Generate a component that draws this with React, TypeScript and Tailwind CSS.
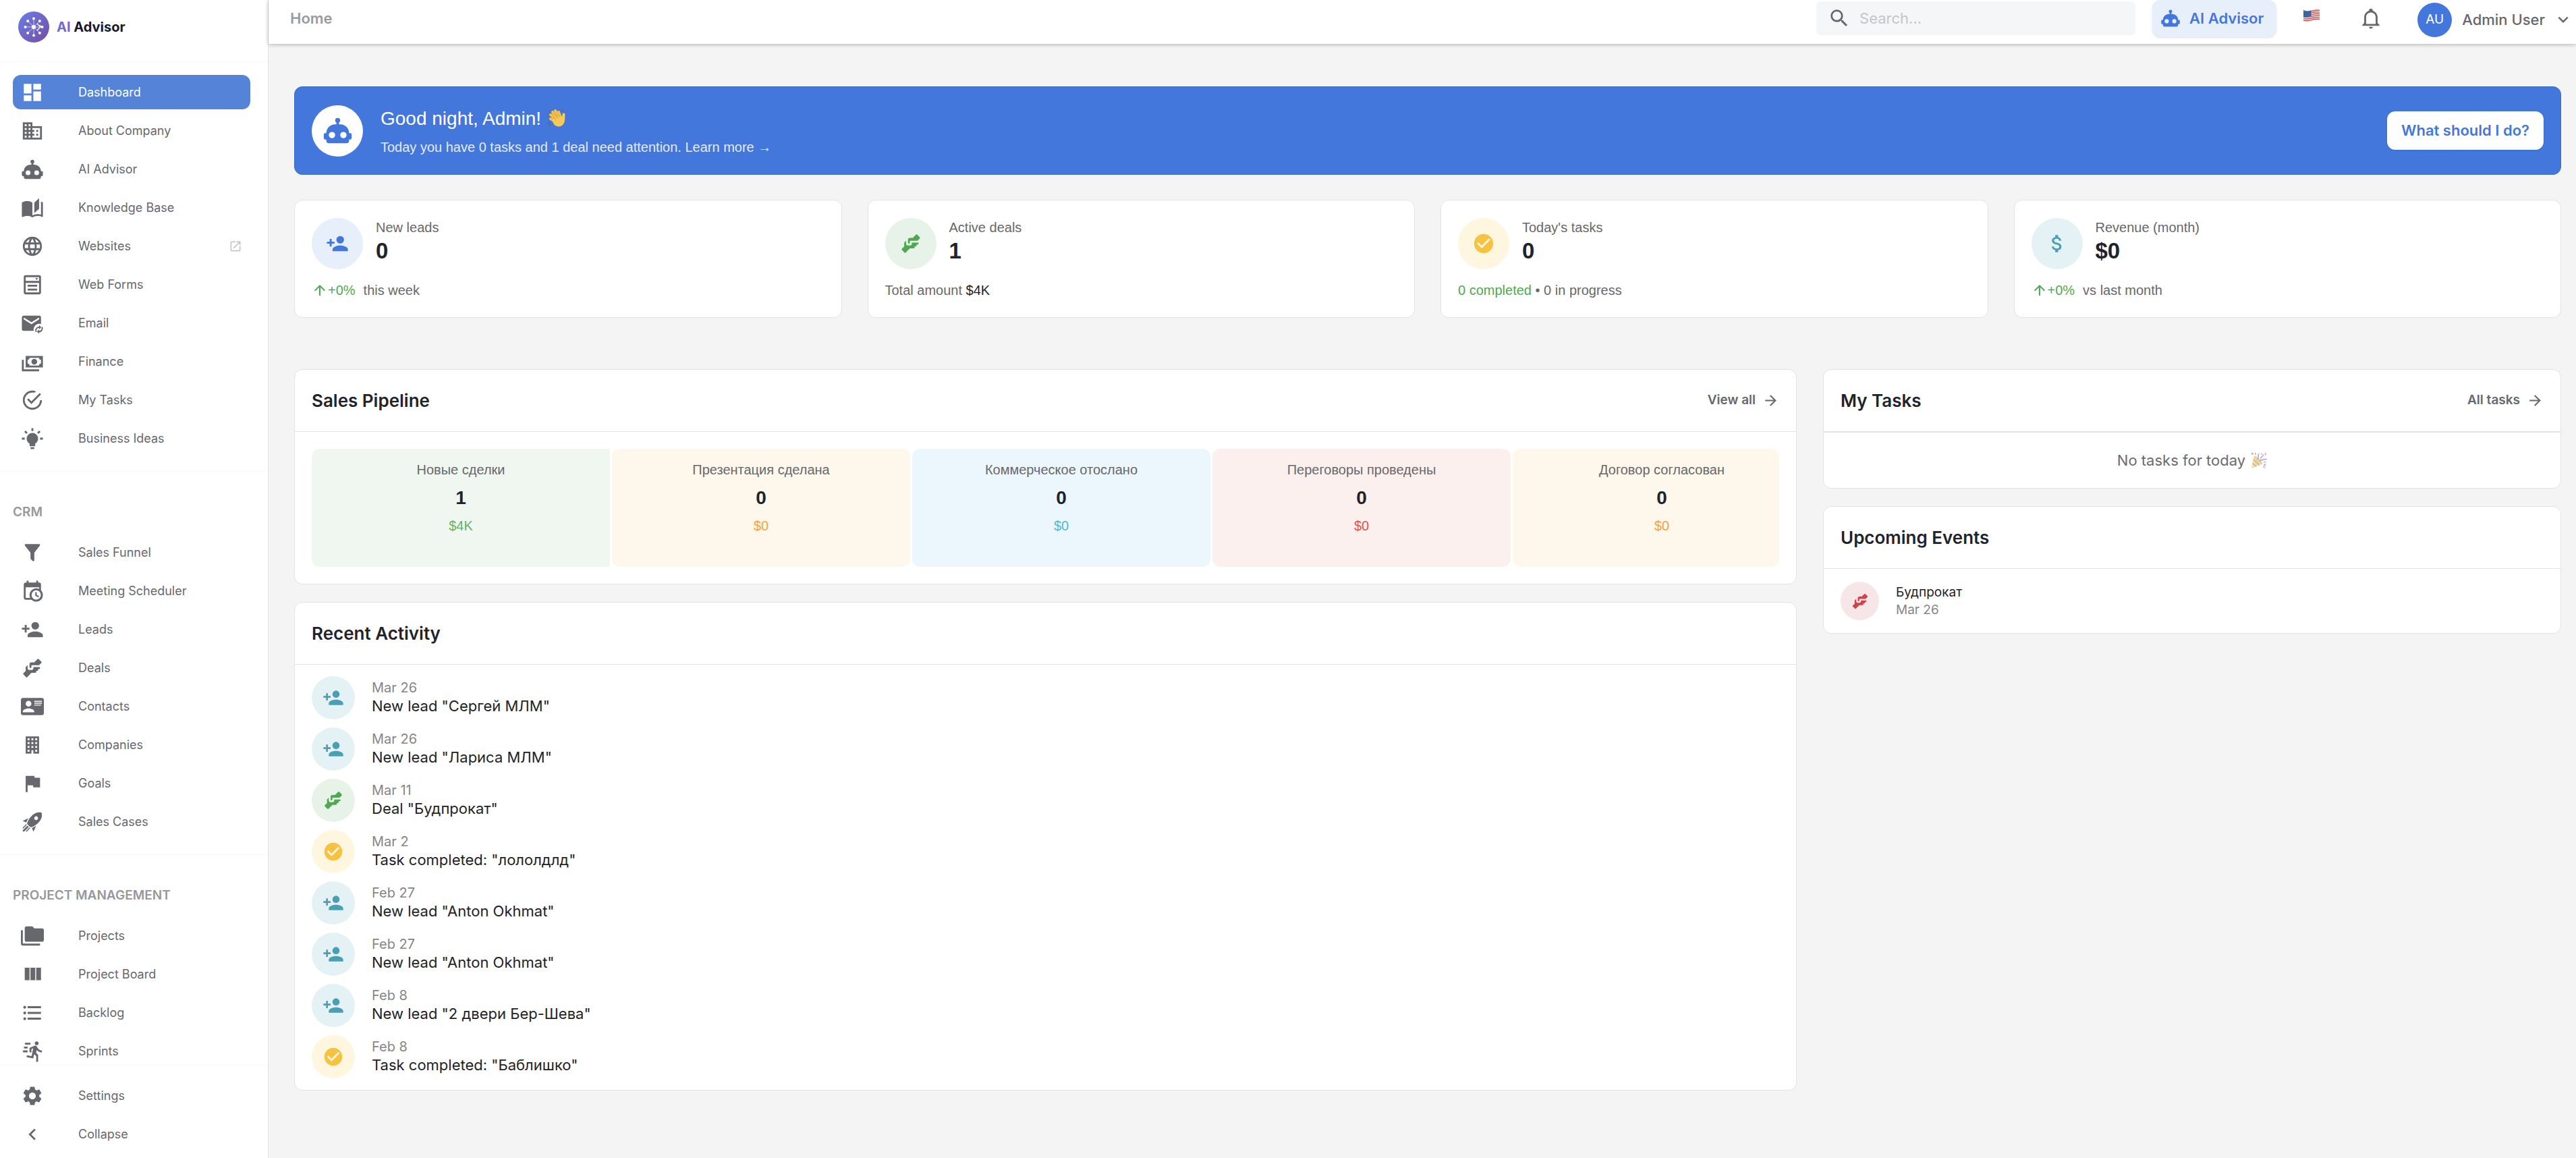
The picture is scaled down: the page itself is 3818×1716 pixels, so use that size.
import { useState } from "react";
import {
  MdDashboard, MdDomain, MdLanguage, MdFlag, MdFormatListBulleted, MdSettings, MdChevronLeft,
  MdOpenInNew, MdSearch, MdCheckCircle, MdAttachMoney, MdArrowUpward, MdArrowForward, MdExpandMore,
} from "react-icons/md";

const PATHS = {
  robot: "M12,2A2,2 0 0,1 14,4C14,4.74 13.6,5.39 13,5.73V7H14A7,7 0 0,1 21,14H22A1,1 0 0,1 23,15V18A1,1 0 0,1 22,19H21V20A2,2 0 0,1 19,22H5A2,2 0 0,1 3,20V19H2A1,1 0 0,1 1,18V15A1,1 0 0,1 2,14H3A7,7 0 0,1 10,7H11V5.73C10.4,5.39 10,4.74 10,4A2,2 0 0,1 12,2M7.5,13A2.5,2.5 0 0,0 5,15.5A2.5,2.5 0 0,0 7.5,18A2.5,2.5 0 0,0 10,15.5A2.5,2.5 0 0,0 7.5,13M16.5,13A2.5,2.5 0 0,0 14,15.5A2.5,2.5 0 0,0 16.5,18A2.5,2.5 0 0,0 19,15.5A2.5,2.5 0 0,0 16.5,13Z",
  book: "M19 2L14 6.5V17.5L19 13V2M6.5 5C4.55 5 2.45 5.4 1 6.5V21.16C1 21.41 1.25 21.66 1.5 21.66C1.6 21.66 1.65 21.59 1.75 21.59C3.1 20.94 5.05 20.5 6.5 20.5C8.45 20.5 10.55 20.9 12 22C13.35 21.15 15.8 20.5 17.5 20.5C19.15 20.5 20.85 20.81 22.25 21.56C22.35 21.61 22.4 21.59 22.5 21.59C22.75 21.59 23 21.34 23 21.09V6.5C22.4 6.05 21.75 5.75 21 5.5V19C19.9 18.65 18.7 18.5 17.5 18.5C15.8 18.5 13.35 19.15 12 20V6.5C10.55 5.4 8.45 5 6.5 5Z",
  form: "M15,5H18L16.5,7L15,5M5,2H19A2,2 0 0,1 21,4V20A2,2 0 0,1 19,22H5A2,2 0 0,1 3,20V4A2,2 0 0,1 5,2M5,4V8H19V4H5M5,20H19V10H5V20M7,12H17V14H7V12M7,16H17V18H7V16Z",
  mailSync: "M3,4C1.9,4 1,4.9 1,6V18A2,2 0 0,0 3,20H13.5A6,6 0 0,1 19,12.5A6,6 0 0,1 21,12.8V6A2,2 0 0,0 19,4H3M3,6L11,11L19,6V8L11,13L3,8V6M19,14V15.5A4,4 0 0,0 15.54,21.5L16.63,20.4C15.8,18.9 16.9,17 19,17V18.5L21.25,16.25L19,14M22.46,15.5L21.37,16.6C22.2,18.1 21.1,20 19,20V18.5L16.75,20.75L19,23V21.5A4,4 0 0,0 22.46,15.5Z",
  cash: "M5,6H23V18H5V6M14,9A3,3 0 0,1 17,12A3,3 0 0,1 14,15A3,3 0 0,1 11,12A3,3 0 0,1 14,9M9,8A2,2 0 0,1 7,10V14A2,2 0 0,1 9,16H19A2,2 0 0,1 21,14V10A2,2 0 0,1 19,8H9M1,10H3V20H19V22H1V10Z",
  checkOutline: "M20,12A8,8 0 0,1 12,20A8,8 0 0,1 4,12A8,8 0 0,1 12,4C12.76,4 13.5,4.11 14.2,4.31L15.77,2.74C14.61,2.26 13.34,2 12,2A10,10 0 0,0 2,12A10,10 0 0,0 12,22A10,10 0 0,0 22,12H20M7.91,10.08L6.5,11.5L11,16L21,6L19.59,4.58L11,13.17L7.91,10.08Z",
  bulb: "M12,6A6,6 0 0,1 18,12C18,14.22 16.79,16.16 15,17.2V19A1,1 0 0,1 14,20H10A1,1 0 0,1 9,19V17.2C7.21,16.16 6,14.22 6,12A6,6 0 0,1 12,6M14,21V22A1,1 0 0,1 13,23H11A1,1 0 0,1 10,22V21H14M20,11H23V13H20V11M1,11H4V13H1V11M13,1V4H11V1H13M4.92,3.5L7.05,5.64L5.63,7.05L3.5,4.93L4.92,3.5M16.95,5.63L19.07,3.5L20.5,4.93L18.37,7.05L16.95,5.63Z",
  filter: "M14,12V19.88C14.04,20.18 13.94,20.5 13.71,20.71C13.32,21.1 12.69,21.1 12.3,20.71L10.29,18.7C10.06,18.47 9.96,18.16 10,17.87V12H9.97L4.21,4.62C3.87,4.19 3.95,3.56 4.38,3.22C4.57,3.08 4.78,3 5,3H19C19.22,3 19.43,3.08 19.62,3.22C20.05,3.56 20.13,4.19 19.79,4.62L14.03,12H14Z",
  calendar: "M15,13H16.5V15.82L18.94,17.23L18.19,18.53L15,16.69V13M19,8H5V19H9.67C9.24,18.09 9,17.07 9,16A7,7 0 0,1 16,9C17.07,9 18.09,9.24 19,9.67V8M5,21C3.89,21 3,20.1 3,19V5C3,3.89 3.89,3 5,3H6V1H8V3H16V1H18V3H19A2,2 0 0,1 21,5V11.1C22.24,12.36 23,14.09 23,16A7,7 0 0,1 16,23C14.09,23 12.36,22.24 11.1,21H5M16,11.15A4.85,4.85 0 0,0 11.15,16C11.15,18.68 13.32,20.85 16,20.85A4.85,4.85 0 0,0 20.85,16C20.85,13.32 18.68,11.15 16,11.15Z",
  userPlus: "M15,14C12.33,14 7,15.33 7,18V20H23V18C23,15.33 17.67,14 15,14M6,10V7H4V10H1V12H4V15H6V12H9V10M15,12A4,4 0 0,0 19,8A4,4 0 0,0 15,4A4,4 0 0,0 11,8A4,4 0 0,0 15,12Z",
  handshake: "M11 6H14L17.29 2.7A1 1 0 0 1 18.71 2.7L21.29 5.29A1 1 0 0 1 21.29 6.7L19 9H11V11A1 1 0 0 1 10 12A1 1 0 0 1 9 11V8A2 2 0 0 1 11 6M5 11V15L2.71 17.29A1 1 0 0 0 2.71 18.71L5.29 21.29A1 1 0 0 0 6.71 21.29L11 17H15A1 1 0 0 0 16 16V15H17A1 1 0 0 0 18 14V13H19A1 1 0 0 0 20 12V11H13V12A2 2 0 0 1 11 14H9A2 2 0 0 1 7 12V9Z",
  card: "M2,3H22C23.05,3 24,3.95 24,5V19C24,20.05 23.05,21 22,21H2C0.95,21 0,20.05 0,19V5C0,3.95 0.95,3 2,3M14,6V7H22V6H14M14,8V9H22V8H14M14,10V11H21V10H14M8,13.91C6,13.91 2,15 2,17V18H14V17C14,15 10,13.91 8,13.91M8,6A3,3 0 0,0 5,9A3,3 0 0,0 8,12A3,3 0 0,0 11,9A3,3 0 0,0 8,6Z",
  building: "M5,3V21H11V17.5H13V21H19V3H5M7,5H9V7H7V5M11,5H13V7H11V5M15,5H17V7H15V5M7,9H9V11H7V9M11,9H13V11H11V9M15,9H17V11H15V9M7,13H9V15H7V13M11,13H13V15H11V13M15,13H17V15H15V13M7,17H9V19H7V17M15,17H17V19H15V17Z",
  rocket: "M13.13 22.19L11.5 18.36C13.07 17.78 14.54 17 15.9 16.09L13.13 22.19M5.64 12.5L1.81 10.87L7.91 8.1C7 9.46 6.22 10.93 5.64 12.5M21.61 2.39C21.61 2.39 16.66 .269 11 5.93C8.81 8.12 7.5 10.53 6.65 12.64C6.37 13.39 6.56 14.21 7.11 14.77L9.24 16.89C9.79 17.45 10.61 17.63 11.36 17.35C13.5 16.53 15.88 15.19 18.07 13C23.73 7.34 21.61 2.39 21.61 2.39M14.54 9.46C13.76 8.68 13.76 7.41 14.54 6.63S16.59 5.85 17.37 6.63C18.14 7.41 18.15 8.68 17.37 9.46C16.59 10.24 15.32 10.24 14.54 9.46M6.24 22L9.88 18.36C9.54 18.27 9.21 18.12 8.91 17.91L4.83 22H6.24M2 22H3.41L8.18 17.24L6.76 15.83L2 20.59V22M2 19.17L6.09 15.09C5.88 14.79 5.73 14.47 5.64 14.12L2 17.76V19.17Z",
  folders: "M22,4H14L12,2H6A2,2 0 0,0 4,4V16A2,2 0 0,0 6,18H22A2,2 0 0,0 24,16V6A2,2 0 0,0 22,4M2,6H0V20A2,2 0 0,0 2,22H20V20H2V6Z",
  columns: "M16,5V18H21V5M4,18H9V5H4M10,18H15V5H10V18Z",
  run: "M16.5,5.5A2,2 0 0,0 18.5,3.5A2,2 0 0,0 16.5,1.5A2,2 0 0,0 14.5,3.5A2,2 0 0,0 16.5,5.5M12.9,19.4L13.9,15L16,17V23H18V15.5L15.9,13.5L16.5,10.5C17.89,12.09 19.89,13 22,13V11C20.24,11.03 18.6,10.11 17.7,8.6L16.7,7C16.34,6.4 15.7,6 15,6C14.7,6 14.5,6.1 14.2,6.1L9,8.3V13H11V9.6L12.8,8.9L11.2,17L6.3,16L5.9,18L12.9,19.4M4,9A1,1 0 0,1 3,8A1,1 0 0,1 4,7H7V9H4M5,5A1,1 0 0,1 4,4A1,1 0 0,1 5,3H10V5H5M3,13A1,1 0 0,1 2,12A1,1 0 0,1 3,11H7V13H3Z",
  bell: "M10 21H14C14 22.1 13.1 23 12 23S10 22.1 10 21M21 19V20H3V19L5 17V11C5 7.9 7.03 5.17 10 4.29V4C10 2.9 10.9 2 12 2S14 2.9 14 4V4.29C16.97 5.17 19 7.9 19 11V17L21 19M17 11C17 8.24 14.76 6 12 6S7 8.24 7 11V18H17V11Z",
};

type IconProps = { className?: string };

const make = (name: keyof typeof PATHS) => ({ className }: IconProps) => (
  <svg viewBox="0 0 24 24" fill="currentColor" aria-hidden="true" className={className}>
    <path d={PATHS[name]} />
  </svg>
);

const Robot = make("robot");
const UserPlus = make("userPlus");
const Handshake = make("handshake");
const Bell = make("bell");

type NavItem = { label: string; icon: React.ComponentType<IconProps>; active?: boolean; external?: boolean };

const MAIN: NavItem[] = [
  { label: "Dashboard", icon: MdDashboard, active: true },
  { label: "About Company", icon: MdDomain },
  { label: "AI Advisor", icon: Robot },
  { label: "Knowledge Base", icon: make("book") },
  { label: "Websites", icon: MdLanguage, external: true },
  { label: "Web Forms", icon: make("form") },
  { label: "Email", icon: make("mailSync") },
  { label: "Finance", icon: make("cash") },
  { label: "My Tasks", icon: make("checkOutline") },
  { label: "Business Ideas", icon: make("bulb") },
];

const CRM: NavItem[] = [
  { label: "Sales Funnel", icon: make("filter") },
  { label: "Meeting Scheduler", icon: make("calendar") },
  { label: "Leads", icon: UserPlus },
  { label: "Deals", icon: Handshake },
  { label: "Contacts", icon: make("card") },
  { label: "Companies", icon: make("building") },
  { label: "Goals", icon: MdFlag },
  { label: "Sales Cases", icon: make("rocket") },
];

const PROJECTS: NavItem[] = [
  { label: "Projects", icon: make("folders") },
  { label: "Project Board", icon: make("columns") },
  { label: "Backlog", icon: MdFormatListBulleted },
  { label: "Sprints", icon: make("run") },
];

function NavLink({ item }: { item: NavItem }) {
  const Icon = item.icon;
  return (
    <li>
      <a
        href="#"
        aria-current={item.active ? "page" : undefined}
        className={`flex h-[51px] items-center rounded-xl pr-3 pl-3 text-[18px] ${
          item.active ? "bg-[#5583d8] text-white" : "text-[#66686d]"
        }`}
      >
        <span className="flex w-[85px] shrink-0">
          <Icon className="size-[34px]" />
        </span>
        <span className="grow">{item.label}</span>
        {item.external && <MdOpenInNew className="size-5 text-[#c3c5c8]" />}
      </a>
    </li>
  );
}

function NavGroup({ title, items }: { title?: string; items: NavItem[] }) {
  return (
    <section className="border-b border-[#f9f9fa] pt-[19px] pr-[26px] pb-[23px] pl-[19px] last:border-b-0">
      {title && <h2 className="pt-[29px] pb-[22px] text-[19px] leading-6 font-semibold text-[#96989c]">{title}</h2>}
      <ul className="flex flex-col gap-[6px]">
        {items.map((item) => (
          <NavLink key={item.label} item={item} />
        ))}
      </ul>
    </section>
  );
}

function Logo() {
  const spokes = [0, 45, 90, 135, 180, 225, 270, 315];
  return (
    <svg viewBox="0 0 46 46" className="size-[46px]" aria-hidden="true">
      <defs>
        <linearGradient id="logo-fill" x1="0" y1="0" x2="1" y2="1">
          <stop offset="0" stopColor="#6a7ee6" />
          <stop offset="1" stopColor="#744da5" />
        </linearGradient>
      </defs>
      <circle cx="23" cy="23" r="23" fill="url(#logo-fill)" />
      {spokes.map((a) => (
        <g key={a} transform={`rotate(${a} 23 23)`}>
          <path d="M23 23V10.5" stroke="#fff" strokeWidth="0.8" opacity="0.8" />
          <circle cx="23" cy="10.5" r="2" fill="#fff" />
        </g>
      ))}
      <circle cx="23" cy="23" r="3" fill="#fff" />
      <path d="M28 18L33 23L28 28M31 20.5L37 23" fill="none" stroke="#fff" strokeWidth="1.3" />
    </svg>
  );
}

function Sidebar() {
  return (
    <aside className="flex h-screen w-[398px] shrink-0 flex-col border-r border-[#e3e3e4] bg-white">
      <a href="#" className="flex h-[92px] shrink-0 items-center gap-[11px] border-b border-[#f9f9fa] pb-3 pl-[27px] text-[20px] font-bold text-[#17182f]">
        <Logo />
        <span>
          <span className="text-[#6f6bcf]">AI</span> Advisor
        </span>
      </a>
      <nav aria-label="Main" className="min-h-0 grow overflow-hidden">
        <NavGroup items={MAIN} />
        <NavGroup title="CRM" items={CRM} />
        <NavGroup title="PROJECT MANAGEMENT" items={PROJECTS} />
      </nav>
      <div className="flex shrink-0 flex-col gap-[6px] border-t border-[#f9f9fa] px-[19px] pt-[19px] pb-[10px] text-[18px] text-[#66686d]">
        <a href="#" className="flex h-[51px] items-center px-3">
          <span className="flex w-[85px]"><MdSettings className="size-[34px]" /></span>
          Settings
        </a>
        <button type="button" className="flex h-[51px] items-center px-3">
          <span className="flex w-[85px]"><MdChevronLeft className="size-[34px]" /></span>
          Collapse
        </button>
      </div>
    </aside>
  );
}

function UsFlag() {
  return (
    <svg viewBox="0 0 26 20" className="h-5 w-[26px]" role="img" aria-label="English">
      <defs>
        <clipPath id="flag-wave">
          <path d="M1 2C5 4 9 3.500 13 2S21 0 25 1V17C21 16 17 16.500 13 18S5 20 1 18Z" />
        </clipPath>
      </defs>
      <g clipPath="url(#flag-wave)">
        <rect width="26" height="20" fill="#f3eeee" />
        {[0, 1, 2, 3, 4, 5, 6, 7].map((i) => (
          <path key={i} d={`M0 ${i * 2.6 + 1}C5 ${i * 2.6 + 3} 9 ${i * 2.6 + 2} 13 ${i * 2.6 + 1}S21 ${i * 2.6 - 1} 26 ${i * 2.6}`} fill="none" stroke="#cf4a4c" strokeWidth="1.3" />
        ))}
        <path d="M0 1C5 4 9 3.500 12.500 2V11C9 12.500 5 13 0 12Z" fill="#41639b" />
      </g>
    </svg>
  );
}

function WavingHand() {
  return (
    <svg viewBox="0 0 28 28" className="size-7" role="img" aria-label="Waving hand">
      <path d="M9 3L5 8M6 2L3 6M21 2L24 4M2 19L5 25M0 21L3 26" stroke="#5f6a7d" strokeWidth="1.2" fill="none" strokeLinecap="round" />
      <g stroke="#f6c14a" strokeWidth="4" strokeLinecap="round">
        <path d="M14 17L5 9" />
        <path d="M15 15L8 5" />
        <path d="M18 13L12 3" />
        <path d="M20 13L17 5" />
        <path d="M12 19L5 15" />
      </g>
      <path d="M7 17L19 11C21 13 22 13 22.500 9C23 5 27 6 26.500 10C26 15 27 20 23 24C19 28 13 27 10 23Z" fill="#f8cb57" />
      <path d="M9 12L13 16M11 8L16 14M15 7L19 12" stroke="#d7922e" strokeWidth="0.9" strokeLinecap="round" />
    </svg>
  );
}

function PartyPopper() {
  return (
    <svg viewBox="0 0 26 26" className="size-6 opacity-60" role="img" aria-label="Party popper">
      <path d="M5 6L18 19L1 26Z" fill="#f3cb4c" />
      <path d="M4 12L14 21M3 18L9 23" stroke="#9b5fc0" strokeWidth="1.4" />
      <ellipse cx="12" cy="13" rx="3" ry="9" transform="rotate(-45 12 13)" fill="#e9b548" />
      <path d="M11 12C13 8 11 5 13 2M14 14C18 11 21 13 26 11" stroke="#4c86e0" strokeWidth="1.8" fill="none" />
      <path d="M15 10L21 4" stroke="#d84d78" strokeWidth="1.4" />
      <path d="M1 1H4V4H1ZM21 19H24V22H21Z" fill="#5a8be2" />
      <path d="M7 1L8 4M23 1L24 5M17 2L18 4M24 16L21 16M20 23L23 25" stroke="#d84d78" strokeWidth="1.6" />
    </svg>
  );
}

function TopBar() {
  const [query, setQuery] = useState("");
  return (
    <header className="relative flex h-[65px] shrink-0 items-center bg-white pb-[11px] pl-8 shadow-[0_1px_6px_rgba(0,0,0,0.28)]">
      <h1 className="grow text-[22px] font-semibold text-[#9b9b9b]">Home</h1>
      <div className="flex h-[50px] w-[473px] items-center gap-[13px] rounded-md bg-[#f5f6f8] px-[17px] text-[#66686d]">
        <MdSearch className="size-[34px] shrink-0" />
        <input
          type="search"
          aria-label="Search"
          value={query}
          onChange={(e) => setQuery(e.target.value)}
          placeholder="Search..."
          className="min-w-0 grow bg-transparent text-[22px] outline-none placeholder:text-[#c4c6c9]"
        />
      </div>
      <button type="button" className="ml-[25px] flex h-[55px] items-center gap-[13px] rounded-xl bg-[#e7effb] pr-[19px] pl-3 text-[22px] font-semibold text-[#4477dc] shadow-sm">
        <Robot className="size-[30px]" />
        AI Advisor
      </button>
      <button type="button" aria-label="Language" className="ml-[39px] pb-2">
        <UsFlag />
      </button>
      <button type="button" aria-label="Notifications" className="ml-[58px] text-[#66686d]">
        <Bell className="size-[34px]" />
      </button>
      <button type="button" className="mr-1 ml-[52px] flex items-center pt-1 text-[22px] font-medium text-[#66686d]">
        <span className="mr-[15px] flex size-[51px] items-center justify-center rounded-full bg-[#4477dc] text-[19px] font-normal text-white">AU</span>
        Admin User
        <MdExpandMore className="ml-3 size-[30px]" />
      </button>
    </header>
  );
}

function Banner() {
  return (
    <section className="flex h-[131px] items-center rounded-xl border border-[#3c6bc6] bg-[#4477dc] px-[25px] text-white">
      <span className="flex size-[76px] shrink-0 items-center justify-center rounded-full bg-white text-[#4477dc]">
        <Robot className="size-[45px]" />
      </span>
      <div className="ml-[26px] grow font-['Liberation_Sans',sans-serif]">
        <h2 className="flex items-center gap-[9px] text-[28px] leading-[49px]">
          Good night, Admin! <WavingHand />
        </h2>
        <p className="text-[20px] leading-[37px] text-[#e3ebfa]">
          Today you have 0 tasks and 1 deal need attention. <a href="#">Learn more →</a>
        </p>
      </div>
      <button type="button" className="h-[57px] rounded-xl bg-white px-[21px] text-[22px] font-semibold text-[#4477dc] shadow-sm">
        What should I do?
      </button>
    </section>
  );
}

function Growth({ note }: { note: string }) {
  return (
    <>
      <span className="flex items-center text-[#4fa953]">
        <MdArrowUpward className="size-6" />
        +0%
      </span>
      <span className="ml-3">{note}</span>
    </>
  );
}

type StatProps = { tone: string; icon: React.ComponentType<IconProps>; label: string; value: string; children: React.ReactNode };

function Stat({ tone, icon: Icon, label, value, children }: StatProps) {
  return (
    <article className="h-[175px] rounded-xl border border-[#e3e3e4] bg-white px-[25px] pt-[26px] font-['Liberation_Sans',sans-serif]">
      <div className="flex items-center gap-[19px]">
        <span className={`flex size-[76px] shrink-0 items-center justify-center rounded-full ${tone}`}>
          <Icon className="size-[34px]" />
        </span>
        <div>
          <h3 className="text-[20px] leading-[22px] text-[#68686a]">{label}</h3>
          <p className="text-[33px] leading-[48px] font-bold text-[#20232b]">{value}</p>
        </div>
      </div>
      <div className="mt-[17px] flex items-center text-[20px] leading-7 text-[#68686a]">{children}</div>
    </article>
  );
}

function Card({ title, action, children }: { title: string; action?: string; children: React.ReactNode }) {
  return (
    <section className="rounded-xl border border-[#e3e3e4] bg-white">
      <header className="flex h-[92px] items-center justify-between border-b border-[#e3e3e4] px-[25px]">
        <h2 className="text-[26px] font-semibold text-[#20232b]">{title}</h2>
        {action && (
          <a href="#" className="flex items-center gap-[10px] text-[19px] font-semibold text-[#66686d]">
            {action}
            <MdArrowForward className="size-[25px]" />
          </a>
        )}
      </header>
      {children}
    </section>
  );
}

const STAGES = [
  { name: "Новые сделки", count: 1, sum: "$4K", box: "bg-[#f0f7f0]", text: "text-[#66b166]" },
  { name: "Презентация сделана", count: 0, sum: "$0", box: "bg-[#fef7eb] rounded-xl", text: "text-[#f2a33c]" },
  { name: "Коммерческое отослано", count: 0, sum: "$0", box: "bg-[#ebf7fc] rounded-xl", text: "text-[#54b8cf]" },
  { name: "Переговоры проведены", count: 0, sum: "$0", box: "bg-[#fcf0ef] rounded-xl", text: "text-[#e0524d]" },
  { name: "Договор согласован", count: 0, sum: "$0", box: "bg-[#fef7eb] rounded-xl", text: "text-[#f2a33c]" },
];

const TONES = {
  lead: { icon: UserPlus, tone: "bg-[#e4f2f6] text-[#4b9fb5]" },
  deal: { icon: Handshake, tone: "bg-[#e7f3e8] text-[#4fa953]" },
  task: { icon: MdCheckCircle, tone: "bg-[#fef6df] text-[#f5c242]" },
};

const ACTIVITY: { kind: keyof typeof TONES; date: string; text: string }[] = [
  { kind: "lead", date: "Mar 26", text: 'New lead "Сергей МЛМ"' },
  { kind: "lead", date: "Mar 26", text: 'New lead "Лариса МЛМ"' },
  { kind: "deal", date: "Mar 11", text: 'Deal "Будпрокат"' },
  { kind: "task", date: "Mar 2", text: 'Task completed: "лололдлд"' },
  { kind: "lead", date: "Feb 27", text: 'New lead "Anton Okhmat"' },
  { kind: "lead", date: "Feb 27", text: 'New lead "Anton Okhmat"' },
  { kind: "lead", date: "Feb 8", text: 'New lead "2 двери Бер-Шева"' },
  { kind: "task", date: "Feb 8", text: 'Task completed: "Баблишко"' },
];

export default function App() {
  return (
    <div className="flex h-screen overflow-hidden bg-[#f4f4f4] font-[Inter,'Noto_Sans',sans-serif]">
      <Sidebar />
      <div className="flex min-w-0 grow flex-col">
        <TopBar />
        <main className="flex flex-col pt-[63px] pr-[22px] pl-[38px]">
          <Banner />
          <div className="mt-[37px] grid grid-cols-4 gap-[38px]">
            <Stat tone="bg-[#e7effb] text-[#4477dc]" icon={UserPlus} label="New leads" value="0">
              <Growth note="this week" />
            </Stat>
            <Stat tone="bg-[#e7f3e8] text-[#4fa953]" icon={Handshake} label="Active deals" value="1">
              <p>Total amount <span className="font-medium text-[#20232b]">$4K</span></p>
            </Stat>
            <Stat tone="bg-[#fef6df] text-[#f5c242]" icon={MdCheckCircle} label="Today's tasks" value="0">
              <p><span className="text-[#4fa953]">0 completed</span> • 0 in progress</p>
            </Stat>
            <Stat tone="bg-[#e4f2f6] text-[#4b9fb5]" icon={MdAttachMoney} label="Revenue (month)" value="$0">
              <Growth note="vs last month" />
            </Stat>
          </div>

          <div className="mt-[76px] flex items-start gap-[39px]">
            <div className="flex w-0 grow-[2227] flex-col gap-[26px]">
              <Card title="Sales Pipeline" action="View all">
                <div className="p-[25px] font-['Liberation_Sans',sans-serif]">
                  <ol className="flex gap-[3px] overflow-hidden rounded-xl">
                    {STAGES.map((s) => (
                      <li key={s.name} className={`flex h-[175px] w-[442px] shrink-0 flex-col items-center pt-4 ${s.box}`}>
                        <span className="text-[20px] leading-[30px] text-[#68686a]">{s.name}</span>
                        <span className="text-[28px] leading-[54px] font-bold text-[#20232b]">{s.count}</span>
                        <span className={`text-[20px] leading-[28px] ${s.text}`}>{s.sum}</span>
                      </li>
                    ))}
                  </ol>
                </div>
              </Card>
              <Card title="Recent Activity">
                <ul className="flex flex-col gap-3 px-[25px] py-[17px]">
                  {ACTIVITY.map((a, i) => {
                    const { icon: Icon, tone } = TONES[a.kind];
                    return (
                      <li key={i} className="flex items-center gap-[25px]">
                        <span className={`flex size-16 shrink-0 items-center justify-center rounded-full ${tone}`}>
                          <Icon className="size-8" />
                        </span>
                        <div className="pb-[2px]">
                          <time className="block text-[20px] leading-[26px] text-[#868688]">{a.date}</time>
                          <p className="text-[22px] leading-7 text-[#222326]">{a.text}</p>
                        </div>
                      </li>
                    );
                  })}
                </ul>
              </Card>
            </div>

            <div className="flex w-0 grow-[1094] flex-col gap-[26px]">
              <Card title="My Tasks" action="All tasks">
                <p className="flex h-[83px] items-center justify-center gap-2 border-t border-[#e3e3e4] text-[22px] text-[#6c6c6e]">
                  No tasks for today <PartyPopper />
                </p>
              </Card>
              <Card title="Upcoming Events">
                <div className="flex h-[95px] items-center gap-[25px] px-[25px]">
                  <span className="flex size-[57px] items-center justify-center rounded-full bg-[#f7e6e8] text-[#cf444c]">
                    <Handshake className="size-[28px]" />
                  </span>
                  <div>
                    <p className="text-[19px] leading-[26px] text-[#222326]">Будпрокат</p>
                    <time className="block text-[19px] leading-[26px] text-[#868688]">Mar 26</time>
                  </div>
                </div>
              </Card>
            </div>
          </div>
        </main>
      </div>
    </div>
  );
}
